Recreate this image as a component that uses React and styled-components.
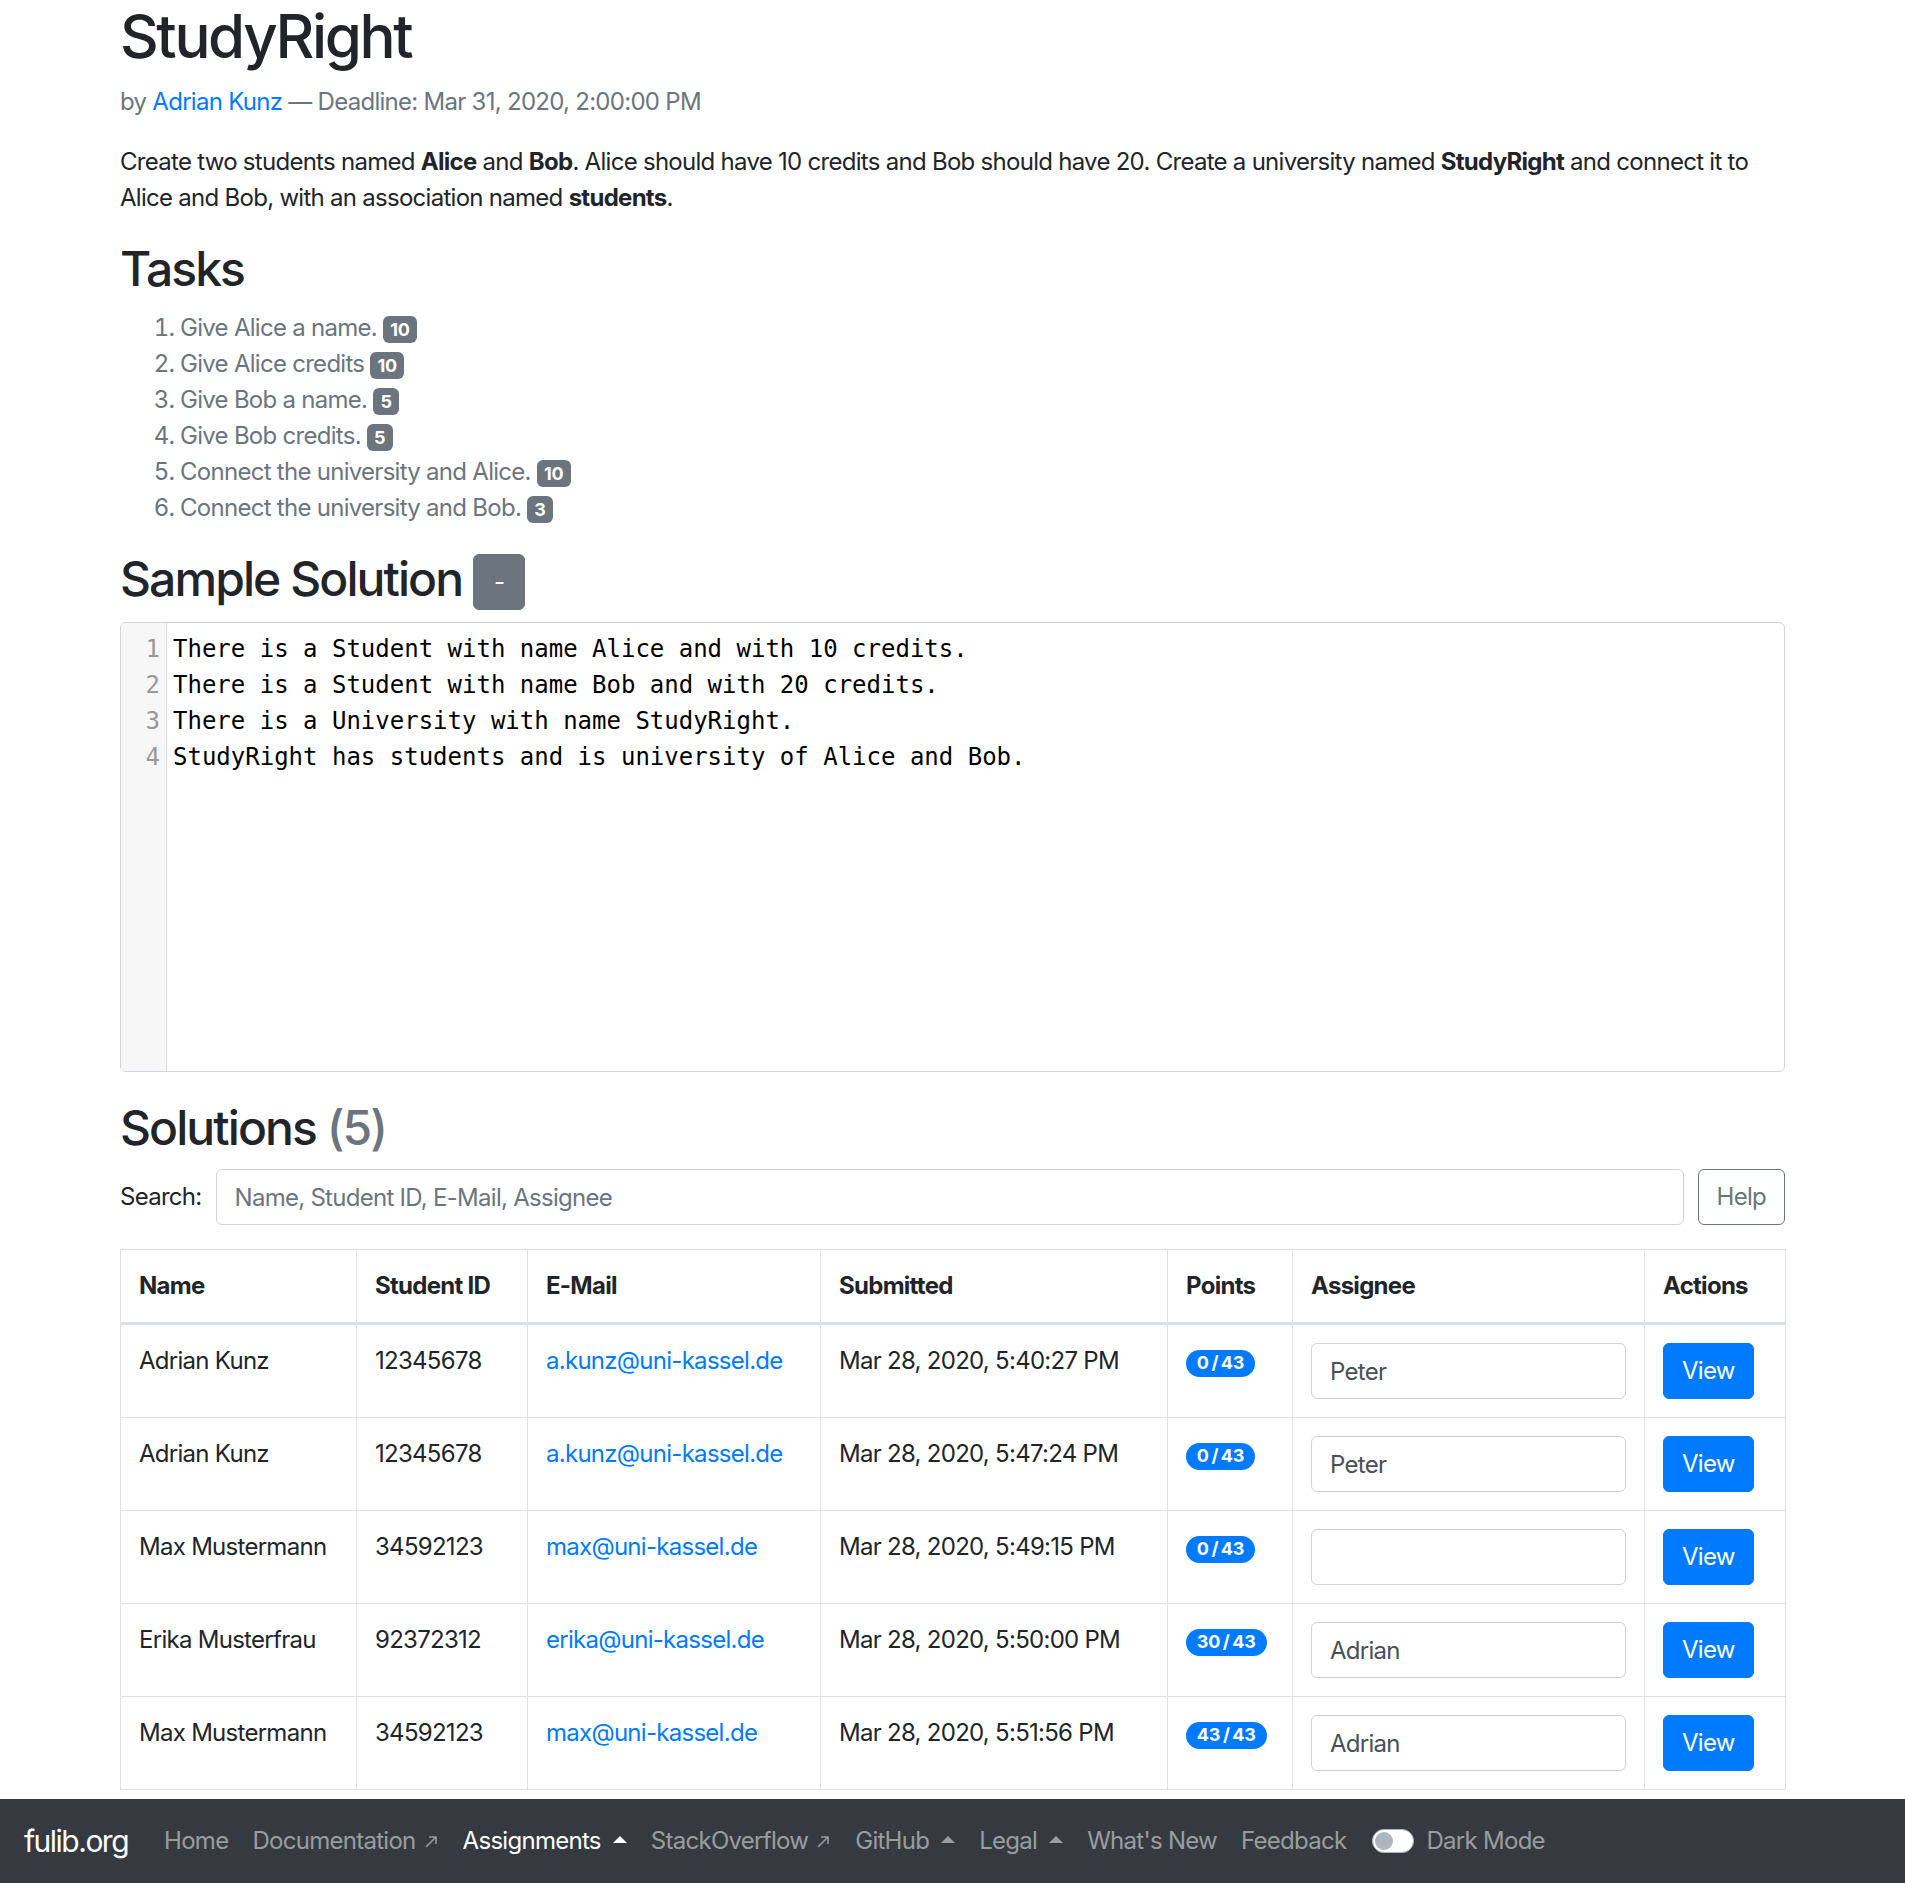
import React from 'react';
import styled, { createGlobalStyle, css } from 'styled-components';

const GlobalStyle = createGlobalStyle`
  * { box-sizing: border-box; }
  body {
    margin: 0;
    font-family: Inter, "Noto Sans", sans-serif;
    font-size: 24px;
    line-height: 1.5;
    letter-spacing: -0.03em;
    color: #212529;
    background: #fff;
  }
`;

const tasks = [
  { text: 'Give Alice a name.', points: 10 },
  { text: 'Give Alice credits', points: 10 },
  { text: 'Give Bob a name.', points: 5 },
  { text: 'Give Bob credits.', points: 5 },
  { text: 'Connect the university and Alice.', points: 10 },
  { text: 'Connect the university and Bob.', points: 3 },
];

const code = [
  'There is a Student with name Alice and with 10 credits.',
  'There is a Student with name Bob and with 20 credits.',
  'There is a University with name StudyRight.',
  'StudyRight has students and is university of Alice and Bob.',
];

const solutions = [
  { name: 'Adrian Kunz', id: '12345678', email: 'a.kunz@uni-kassel.de', submitted: 'Mar 28, 2020, 5:40:27 PM', points: 0, assignee: 'Peter' },
  { name: 'Adrian Kunz', id: '12345678', email: 'a.kunz@uni-kassel.de', submitted: 'Mar 28, 2020, 5:47:24 PM', points: 0, assignee: 'Peter' },
  { name: 'Max Mustermann', id: '34592123', email: 'max@uni-kassel.de', submitted: 'Mar 28, 2020, 5:49:15 PM', points: 0, assignee: '' },
  { name: 'Erika Musterfrau', id: '92372312', email: 'erika@uni-kassel.de', submitted: 'Mar 28, 2020, 5:50:00 PM', points: 30, assignee: 'Adrian' },
  { name: 'Max Mustermann', id: '34592123', email: 'max@uni-kassel.de', submitted: 'Mar 28, 2020, 5:51:56 PM', points: 43, assignee: 'Adrian' },
];

const columns = [
  { title: 'Name', width: 236 },
  { title: 'Student ID', width: 171 },
  { title: 'E-Mail', width: 293 },
  { title: 'Submitted', width: 347 },
  { title: 'Points', width: 125 },
  { title: 'Assignee', width: 352 },
  { title: 'Actions', width: 141 },
];

const Page = styled.div`
  min-height: 100vh;
  display: flex;
  flex-direction: column;
`;

const Main = styled.main`
  flex: 1;
  width: 1710px;
  margin: 0 auto;
  padding: 0 22.5px 6px;
`;

const Title = styled.h1`
  font-size: 60px;
  font-weight: 500;
  line-height: 1.2;
  letter-spacing: -0.04em;
  margin: 0 0 12px;
`;

const Muted = styled.p`
  color: #6c757d;
  margin: 0 0 24px;
`;

const Link = styled.a`
  color: #007bff;
  text-decoration: none;
`;

const Paragraph = styled.p`
  margin: 0 0 24px;
`;

const Heading = styled.h2`
  font-size: 48px;
  font-weight: 500;
  line-height: 1.2;
  letter-spacing: -0.04em;
  margin: 0 0 12px;
`;

const Count = styled.span`
  color: #6c757d;
`;

const TaskList = styled.ol`
  color: #6c757d;
  margin: 0 0 24px;
  padding-left: 60px;
`;

const Badge = styled.span`
  display: inline-block;
  padding: 0.25em 0.4em;
  font-size: 75%;
  font-weight: 700;
  line-height: 1;
  letter-spacing: -0.01em;
  text-align: center;
  white-space: nowrap;
  vertical-align: baseline;
  border-radius: 6px;
  color: #fff;
  background: ${(p) => (p.$variant === 'primary' ? '#007bff' : '#6c757d')};
  ${(p) =>
    p.$pill &&
    css`
      padding: 0.25em 0.6em;
      border-radius: 10em;
    `}
`;

const Button = styled.button`
  display: inline-block;
  font-family: inherit;
  font-size: 24px;
  font-weight: 400;
  line-height: 1.5;
  letter-spacing: -0.03em;
  padding: 9px 18px;
  border-radius: 6px;
  border: 1px solid transparent;
  vertical-align: middle;
  cursor: pointer;
  ${(p) =>
    p.$variant === 'primary' &&
    css`
      color: #fff;
      background: #007bff;
      border-color: #007bff;
    `}
  ${(p) =>
    p.$variant === 'secondary' &&
    css`
      color: #fff;
      background: #6c757d;
      border-color: #6c757d;
      padding: 9px 20px;
    `}
  ${(p) =>
    p.$variant === 'outline' &&
    css`
      color: #6c757d;
      background: transparent;
      border-color: #6c757d;
    `}
`;

const Editor = styled.div`
  display: flex;
  height: 450px;
  border: 1px solid #ced4da;
  border-radius: 6px;
  overflow: hidden;
  margin-bottom: 27px;
  font-family: "DejaVu Sans Mono", "Liberation Mono", monospace;
  font-size: 24px;
  line-height: 36px;
  letter-spacing: 0;
`;

const Gutter = styled.div`
  width: 46px;
  background: #f7f7f7;
  border-right: 1px solid #ddd;
  padding: 8px 6px 0 0;
  text-align: right;
  color: #999;
`;

const CodeLines = styled.div`
  flex: 1;
  padding: 8px 0 0 6px;
  color: #000;
  white-space: pre;
`;

const SearchRow = styled.div`
  display: flex;
  align-items: center;
  gap: 14px;
  margin-bottom: 24px;
`;

const Input = styled.input`
  display: block;
  width: 100%;
  height: 56px;
  padding: 9px 18px;
  font-family: inherit;
  font-size: 24px;
  line-height: 1.5;
  letter-spacing: -0.03em;
  color: #495057;
  background: #fff;
  border: 1px solid #ced4da;
  border-radius: 6px;
  &::placeholder {
    color: #6c757d;
  }
`;

const SearchInput = styled(Input)`
  flex: 1;
`;

const Table = styled.table`
  width: 100%;
  table-layout: fixed;
  border-collapse: collapse;
  border: 1px solid #dee2e6;
`;

const Th = styled.th`
  padding: 18px;
  text-align: left;
  font-weight: 700;
  vertical-align: bottom;
  border: 1px solid #dee2e6;
  border-bottom-width: 3px;
`;

const Td = styled.td`
  padding: 18px;
  vertical-align: top;
  border: 1px solid #dee2e6;
  white-space: nowrap;
`;

const Navbar = styled.nav`
  display: flex;
  align-items: center;
  height: 84px;
  padding: 12px 24px;
  background: #343a40;
`;

const Brand = styled.a`
  font-size: 30px;
  line-height: 45px;
  letter-spacing: -0.05em;
  padding: 7.5px 0;
  margin-right: 24px;
  color: #fff;
  text-decoration: none;
`;

const NavLink = styled.a`
  display: flex;
  align-items: center;
  padding: 12px;
  color: ${(p) => (p.$active ? '#fff' : 'rgba(255, 255, 255, 0.5)')};
  text-decoration: none;
  white-space: nowrap;
  ${(p) =>
    p.$dropup &&
    css`
      &::after {
        content: '';
        display: inline-block;
        margin-left: 12px;
        border-left: 0.3em solid transparent;
        border-right: 0.3em solid transparent;
        border-bottom: 0.3em solid;
        margin-bottom: 0.12em;
      }
    `}
`;

const External = styled.svg`
  margin-left: 7px;
  margin-top: 2px;
`;

const SwitchItem = styled.label`
  display: flex;
  align-items: center;
  gap: 12px;
  margin-left: 14px;
  color: rgba(255, 255, 255, 0.5);
`;

const Track = styled.span`
  position: relative;
  width: 42px;
  height: 24px;
  border-radius: 12px;
  background: #fff;
  border: 1.5px solid #adb5bd;
  &::after {
    content: '';
    position: absolute;
    top: 1.5px;
    left: 2px;
    width: 18px;
    height: 18px;
    border-radius: 50%;
    background: #adb5bd;
  }
`;

const ExternalIcon = () => (
  <External width="16" height="16" viewBox="0 0 16 16" fill="none" stroke="currentColor" strokeWidth="1.5">
    <path d="M3 13 L13 3 M6 3 H13 V10" />
  </External>
);

const points = (n) => `${n}\u2009/\u200943`;

const App = () => (
  <Page>
    <GlobalStyle />
    <Main>
      <Title>StudyRight</Title>
      <Muted>
        by <Link href="#">Adrian Kunz</Link> — Deadline: Mar 31, 2020, 2:00:00 PM
      </Muted>
      <Paragraph>
        Create two students named <b>Alice</b> and <b>Bob</b>. Alice should have 10 credits and Bob should
        have 20. Create a university named <b>StudyRight</b> and connect it to Alice and Bob, with an
        association named <b>students</b>.
      </Paragraph>

      <Heading>Tasks</Heading>
      <TaskList>
        {tasks.map((task, index) => (
          <li key={index}>
            {task.text} <Badge>{task.points}</Badge>
          </li>
        ))}
      </TaskList>

      <Heading>
        Sample Solution <Button $variant="secondary">-</Button>
      </Heading>
      <Editor>
        <Gutter>
          {code.map((_, index) => (
            <div key={index}>{index + 1}</div>
          ))}
        </Gutter>
        <CodeLines>
          {code.map((line, index) => (
            <div key={index}>{line}</div>
          ))}
        </CodeLines>
      </Editor>

      <Heading>
        Solutions <Count>(5)</Count>
      </Heading>
      <SearchRow>
        <span>Search:</span>
        <SearchInput placeholder="Name, Student ID, E-Mail, Assignee" />
        <Button $variant="outline">Help</Button>
      </SearchRow>

      <Table>
        <colgroup>
          {columns.map((column) => (
            <col key={column.title} style={{ width: column.width }} />
          ))}
        </colgroup>
        <thead>
          <tr>
            {columns.map((column) => (
              <Th key={column.title}>{column.title}</Th>
            ))}
          </tr>
        </thead>
        <tbody>
          {solutions.map((solution, index) => (
            <tr key={index}>
              <Td>{solution.name}</Td>
              <Td>{solution.id}</Td>
              <Td>
                <Link href="#">{solution.email}</Link>
              </Td>
              <Td>{solution.submitted}</Td>
              <Td>
                <Badge $variant="primary" $pill>
                  {points(solution.points)}
                </Badge>
              </Td>
              <Td>
                <Input defaultValue={solution.assignee} />
              </Td>
              <Td>
                <Button $variant="primary">View</Button>
              </Td>
            </tr>
          ))}
        </tbody>
      </Table>
    </Main>

    <Navbar>
      <Brand href="#">fulib.org</Brand>
      <NavLink href="#">Home</NavLink>
      <NavLink href="#">
        Documentation
        <ExternalIcon />
      </NavLink>
      <NavLink href="#" $active $dropup>
        Assignments
      </NavLink>
      <NavLink href="#">
        StackOverflow
        <ExternalIcon />
      </NavLink>
      <NavLink href="#" $dropup>
        GitHub
      </NavLink>
      <NavLink href="#" $dropup>
        Legal
      </NavLink>
      <NavLink href="#">What's New</NavLink>
      <NavLink href="#">Feedback</NavLink>
      <SwitchItem>
        <Track />
        Dark Mode
      </SwitchItem>
    </Navbar>
  </Page>
);

export default App;
